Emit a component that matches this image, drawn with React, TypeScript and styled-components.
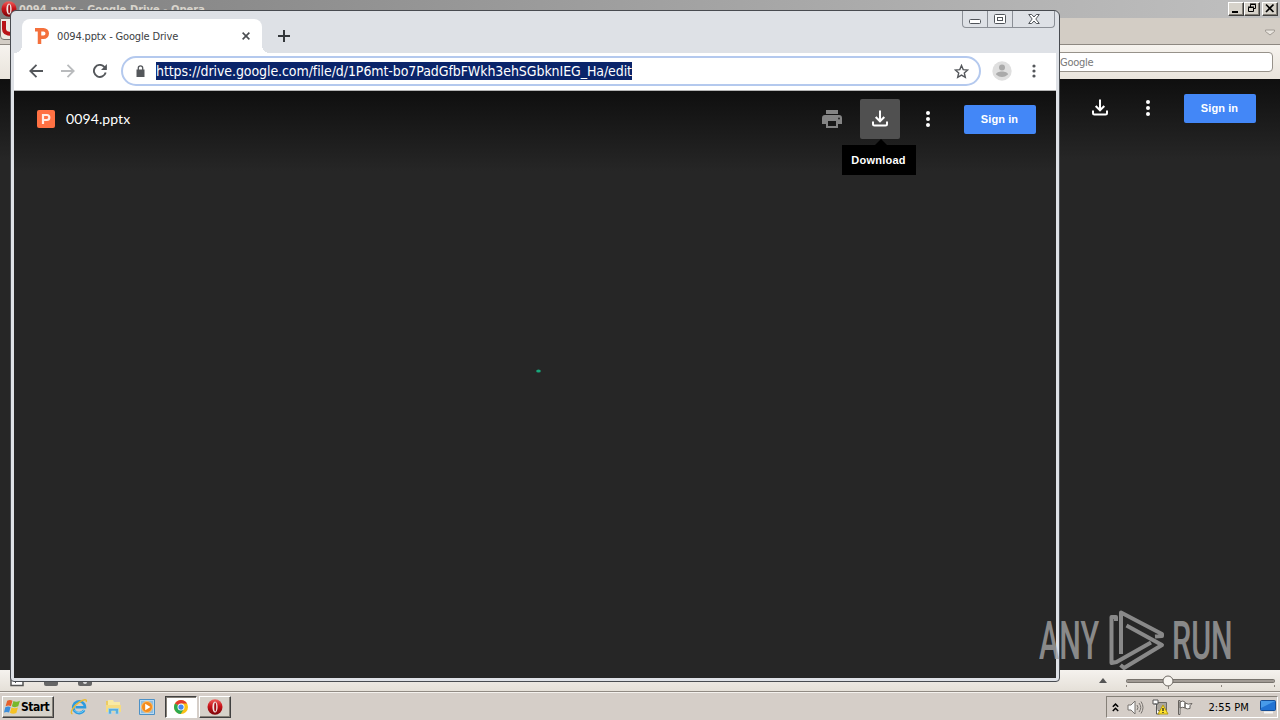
import type { ReactNode } from 'react';
import styled, { createGlobalStyle, css } from 'styled-components';

const tahoma = "'DejaVu Sans Condensed', 'DejaVu Sans', sans-serif";
const arial = "'Liberation Sans', Arial, sans-serif";

const DownloadIcon = () => (
  <svg width="18" height="18" viewBox="0 0 18 18" fill="none" stroke="#fff" strokeWidth="2">
    <path d="M9 .5v10.500M4.700 7 9 11.300 13.300 7M2 11.500V14q0 1.500 1.500 1.500h11Q16 15.500 16 14v-2.500" />
  </svg>
);

const DotsIcon = ({ color = '#fff', r = 2, gap = 6 }: { color?: string; r?: number; gap?: number }) => (
  <svg width="6" height="18" viewBox="0 0 6 18" fill={color}>
    <circle cx="3" cy={9 - gap} r={r} />
    <circle cx="3" cy="9" r={r} />
    <circle cx="3" cy={9 + gap} r={r} />
  </svg>
);

const PrintIcon = () => (
  <svg width="20" height="18" viewBox="0 0 20 18" fill="#848484">
    <path d="M4 0h12v4H4zM3 5h14a3 3 0 0 1 3 3v6h-4v4H4v-4H0V8a3 3 0 0 1 3-3z" />
    <path d="M6 11h8v5H6z" fill="#181818" />
    <circle cx="17" cy="8.5" r="1" fill="#222" />
  </svg>
);

const OperaIcon = ({ size = 16 }: { size?: number }) => (
  <svg width={size} height={size} viewBox="0 0 16 16">
    <defs>
      <linearGradient id="operaRed" x1="0" y1="0" x2="0" y2="1">
        <stop offset="0" stopColor="#f0605c" />
        <stop offset=".45" stopColor="#c8141a" />
        <stop offset="1" stopColor="#7c0408" />
      </linearGradient>
    </defs>
    <ellipse cx="8" cy="8" rx="7.5" ry="7.7" fill="url(#operaRed)" />
    <ellipse cx="8" cy="8" rx="2.6" ry="5.6" fill="#f1e8e5" />
    <ellipse cx="8.2" cy="8" rx="1" ry="4.6" fill="#a50c12" />
  </svg>
);

const ChromeIcon = () => (
  <svg width="14" height="14" viewBox="0 0 16 16">
    <circle cx="8" cy="8" r="8" fill="#fbc116" />
    <path d="M8 8 1.1 4A8 8 0 0 1 14.9 4H8z" fill="#e33b2e" />
    <path d="M1.1 4A8 8 0 0 0 7.6 16L11.5 10 8 8z" fill="#2da94f" />
    <circle cx="8" cy="8" r="4" fill="#fff" />
    <circle cx="8" cy="8" r="3" fill="#4688f1" />
  </svg>
);

const IeIcon = () => (
  <svg width="18" height="18" viewBox="0 0 18 18" fill="none">
    <path d="M14.2 12.2A5.9 5.9 0 1 1 15 9.3H5.5" stroke="#2d9be0" strokeWidth="2.6" />
    <path d="M14 11.8A5.5 5.5 0 0 1 4.5 12" stroke="#75cff5" strokeWidth="1" />
    <path d="M2.5 15.8C-.8 15.5 3.2 8 9 4.3c4.5-3 8.5-3.8 7.1-.3" stroke="#e9bb35" strokeWidth="1.4" />
  </svg>
);

const FolderIcon = () => (
  <svg width="17" height="16" viewBox="0 0 17 16">
    <path d="M1 2h5l1 2h8v9H1z" fill="#eccb62" />
    <path d="M3 1h5l1 2h6v4H3z" fill="#f8eaa4" />
    <path d="M1 6h15v7H1z" fill="#f5dc82" />
    <path d="M3.5 15V9.5h10V15h-3v-3h-4v3z" fill="#5aaddd" stroke="#a9daf2" strokeWidth=".7" />
  </svg>
);

const PlayerIcon = () => (
  <svg width="16" height="16" viewBox="0 0 16 16">
    <path d="M.5.5h15v15H.5z" fill="#b8d9f1" stroke="#4d91c6" />
    <path d="M2 2h12v12H2z" fill="#8fbde0" />
    <circle cx="8" cy="8" r="5.5" fill="#f38b1d" stroke="#ffc16d" />
    <path d="m6.2 4.7 5.3 3.3-5.3 3.3z" fill="#fff" />
  </svg>
);

const WindowsFlag = () => (
  <svg width="17" height="16" viewBox="0 0 16 15">
    <path d="M3 1.500C5 .500 6.500.700 8 1.500L6.500 6.700C5 6 3.300 6 1.500 6.800z" fill="#e6602b" />
    <path d="M8.900 1.900c1.800.900 3.900.800 6.100-.300l-1.600 5.300c-2 1-4.200 1-6-.100z" fill="#78b82d" />
    <path d="M1.200 7.700c1.900-.800 3.500-.800 5-.100L4.800 12.700C3.300 12 1.700 12 0 12.700z" fill="#3d8edb" />
    <path d="M7.100 8c1.800.900 3.900.900 6-.100l-1.500 5.200c-2 1-4.200.900-6-.100z" fill="#f6c224" />
  </svg>
);

const Toolbar = ({ children }: { children: ReactNode }) => <ViewerActions>{children}</ViewerActions>;

const OperaWindow = () => (
  <OperaFrame>
    <OperaTitle>
      <OperaIcon />
      <span>0094.pptx - Google Drive - Opera</span>
      <ClassicButtons>
        <ClassicButton>
          <svg width="14" height="11"><path d="M3 8h6v2H3z" /></svg>
        </ClassicButton>
        <ClassicButton>
          <svg width="14" height="11" fill="none" stroke="#000">
            <path d="M5.500 4V1.500h5v4H9M5 1h6M3.500 4.500h5v4h-5zM3 4h6" />
          </svg>
        </ClassicButton>
        <ClassicButton $gap>
          <svg width="14" height="11" stroke="#000" strokeWidth="1.700"><path d="m3 1.500 7.500 7.500m0-7.500L3 9" /></svg>
        </ClassicButton>
      </ClassicButtons>
    </OperaTitle>
    <OperaTabs>
      <OperaMenu>
        <svg width="12" height="16" viewBox="0 0 12 16" fill="none" stroke="#b91217" strokeWidth="4">
          <path d="M3 0v8q0 5 8 5" />
        </svg>
      </OperaMenu>
      <svg width="10" height="7" viewBox="0 0 10 7" fill="#e9e5df" stroke="#a09b94">
        <path d="M.5 1h9v1.500L5 6 .5 2.500z" />
      </svg>
    </OperaTabs>
    <OperaAddress>
      <OperaSearch>Google</OperaSearch>
    </OperaAddress>
    <OperaPage>
      <Toolbar>
        <IconSlot><DownloadIcon /></IconSlot>
        <IconSlot><DotsIcon /></IconSlot>
        <SignIn>Sign in</SignIn>
      </Toolbar>
    </OperaPage>
    <OperaStatus>
      <StatusIcons>
        <svg width="84" height="14" viewBox="0 0 84 14">
          <path d="M1 0v11.500h12V0" fill="#fff" stroke="#555" strokeWidth="1.500" />
          <path d="m3 6 3 3" stroke="#555" />
          <path d="M34 6h14v4q0 2-2 2H36q-2 0-2-2z" fill="#666" />
          <path d="M68 6h14v4q0 2-2 2H70q-2 0-2-2z" fill="#666" />
          <circle cx="75" cy="8" r="2" fill="#ddd" />
        </svg>
      </StatusIcons>
      <svg width="8" height="5" viewBox="0 0 8 5" fill="#555"><path d="m4 0 4 5H0z" /></svg>
      <svg width="150" height="18" viewBox="0 0 150 18">
        <rect x=".5" y="7.500" width="148" height="3" rx="1" fill="#a09a94" stroke="#77726c" />
        <path d="M.5 13v2M42.500 13v4M95.500 13v2M148.500 13v2" stroke="#8d8780" />
        <circle cx="42" cy="9" r="5" fill="#f8f5f0" stroke="#6e6963" />
      </svg>
    </OperaStatus>
  </OperaFrame>
);

const ChromeWindow = () => (
  <ChromeFrame>
    <TabStrip>
      <Tab>
        <svg width="14" height="16" viewBox="0 0 14 16" fill="none" stroke="#f4703c" strokeWidth="3.500">
          <path d="M0 1.750h8.500a3.250 3.250 0 0 1 0 7.500H5M4.500 1v15" />
        </svg>
        <TabTitle>0094.pptx - Google Drive</TabTitle>
        <svg width="8" height="8" viewBox="0 0 9 9" stroke="#4a4d51" strokeWidth="1.800"><path d="m.7.7 7.600 7.600m0-7.600L.7 8.300" /></svg>
      </Tab>
      <NewTab>
        <svg width="12" height="12" viewBox="0 0 12 12" stroke="#34373b" strokeWidth="2"><path d="M6 0v12M0 6h12" /></svg>
      </NewTab>
      <Caption>
        <CaptionButton $width={24}>
          <svg width="13" height="6"><rect x=".5" y=".5" width="11" height="4" rx="1" fill="#fff" stroke="#50545a" /></svg>
        </CaptionButton>
        <CaptionButton $width={25}>
          <svg width="12" height="10" fill="#fff" stroke="#50545a">
            <rect x=".5" y=".5" width="11" height="9" rx="1" />
            <rect x="3.500" y="3.500" width="5" height="3" />
          </svg>
        </CaptionButton>
        <CaptionButton $width={42}>
          <svg width="12" height="10" viewBox="0 0 12 10" fill="#fff" stroke="#50545a">
            <path d="M.7.5h3L6 3 8.300.5h3L7.800 5l3.500 4.500h-3L6 7 3.700 9.500h-3L4.200 5z" />
          </svg>
        </CaptionButton>
      </Caption>
    </TabStrip>
    <NavBar>
      <NavIcons>
        <svg width="14" height="14" viewBox="0 0 14 14" fill="none" stroke="#54575b" strokeWidth="1.800"><path d="M14 7H1.500M7.500.8 1.300 7l6.200 6.200" /></svg>
        <svg width="14" height="14" viewBox="0 0 14 14" fill="none" stroke="#b9bbbd" strokeWidth="1.800"><path d="M0 7h12.500M6.500.8 12.700 7l-6.200 6.200" /></svg>
        <svg width="14" height="14" viewBox="0 0 14 14" fill="none" stroke="#54575b" strokeWidth="1.900">
          <path d="M12.700 8.500A6 6 0 1 1 11.300 2.800L13 4.500" />
          <path d="M13.900 0v6H8z" fill="#54575b" stroke="none" />
        </svg>
      </NavIcons>
      <Omnibox>
        <svg width="9" height="12" viewBox="0 0 9 12" fill="#54575b">
          <path d="M.5 4.500h8V12h-8z" />
          <path d="M2.300 5V3a2.200 2.200 0 0 1 4.400 0v2" fill="none" stroke="#54575b" strokeWidth="1.300" />
        </svg>
        <Url>https://drive.google.com/file/d/1P6mt-bo7PadGfbFWkh3ehSGbknIEG_Ha/edit</Url>
        <svg width="15" height="15" viewBox="0 0 15 15" fill="none" stroke="#54575b" strokeWidth="1.400">
          <path d="m7.500 1.500 1.700 4.100 4.500.4-3.400 3 1 4.400-3.800-2.300-3.800 2.300 1-4.400L1.300 6l4.500-.4z" />
        </svg>
      </Omnibox>
      <svg width="20" height="20" viewBox="0 0 20 20">
        <circle cx="10" cy="10" r="9.700" fill="#dfdfdf" />
        <circle cx="10" cy="6.500" r="3" fill="#aaa" />
        <path d="M4 13.500c0-4 12-4 12 0q-6 5-12 0z" fill="#aaa" />
      </svg>
      <DotsIcon color="#54575b" r={1.6} gap={5} />
    </NavBar>
    <DrivePage>
      <DriveHeader>
        <svg width="18" height="18" viewBox="0 0 18 18">
          <rect width="18" height="18" rx="2" fill="#ff7143" />
          <path d="M6 14V5h3.800a2.500 2.500 0 0 1 0 5H6" fill="none" stroke="#ffece5" strokeWidth="2.200" />
        </svg>
        <FileName>0094.pptx</FileName>
        <Toolbar>
          <IconSlot><PrintIcon /></IconSlot>
          <IconSlot $active>
            <DownloadIcon />
            <Tooltip>Download</Tooltip>
          </IconSlot>
          <IconSlot><DotsIcon /></IconSlot>
          <SignIn>Sign in</SignIn>
        </Toolbar>
      </DriveHeader>
      <Loader>
        <svg width="5" height="4"><ellipse cx="2.500" cy="2" rx="2.300" ry="1.600" fill="#18a77b" /></svg>
      </Loader>
    </DrivePage>
  </ChromeFrame>
);

const Taskbar = () => (
  <TaskbarFrame>
    <StartButton>
      <WindowsFlag />
      <span>Start</span>
    </StartButton>
    <QuickLaunch>
      <IeIcon />
      <FolderIcon />
      <PlayerIcon />
    </QuickLaunch>
    <TaskButton $pressed><ChromeIcon /></TaskButton>
    <TaskButton><OperaIcon /></TaskButton>
    <Tray>
      <svg width="7" height="9" viewBox="0 0 7 9" fill="none" stroke="#000" strokeWidth="1.500"><path d="m.8 3.800 2.700-2.700 2.700 2.700M.8 8l2.700-2.700L6.200 8" /></svg>
      <svg width="17" height="15" viewBox="0 0 17 15" fill="none" stroke="#77736f">
        <path d="M1 5h3l4-4v13l-4-4H1z" fill="#fafafa" />
        <path d="M10 5q2 2.500 0 5M12 3q3.500 4.500 0 9M14 1.500q4 6 0 12" />
      </svg>
      <svg width="17" height="16" viewBox="0 0 17 16">
        <path d="M4.500 3.500h10v8h-10z" fill="#aaa69e" stroke="#6b6965" />
        <path d="M1 1h5v4H1zM2.500 5h2v10h3" fill="#fff" stroke="#555" />
        <path d="m11 6 5 9H6z" fill="#ffe32c" stroke="#b69a12" />
        <path d="M11 9v3M11 13v1" stroke="#222" strokeWidth="1.300" />
      </svg>
      <svg width="16" height="15" viewBox="0 0 16 15" fill="#fff" stroke="#66625e">
        <path d="M1.500.5v14h1.500V.5zM3 2q3-2 5 0v6q-2-1.500-5 0zM8 3q3 2 7 .5-3 2-2 5Q10 9.500 8 8z" />
      </svg>
      <Clock>2:55 PM</Clock>
      <svg width="16" height="14" viewBox="0 0 16 14">
        <rect x=".5" y=".5" width="15" height="10" rx="1" fill="#2273d3" stroke="#164e96" />
        <path d="M1 1h14L1 8z" fill="#5eb1f5" opacity=".65" />
        <path d="M4 12.500h9" stroke="#f5f5f5" strokeWidth="2" />
      </svg>
    </Tray>
  </TaskbarFrame>
);

const App = () => (
  <Desktop>
    <GlobalStyle />
    <OperaWindow />
    <ChromeWindow />
    <Taskbar />
    <Watermark>
      <Wordmark>ANY</Wordmark>
      <svg width="57" height="64" viewBox="0 0 57 64" fill="none" stroke="#a2a2a2" strokeWidth="4" strokeLinejoin="round">
        <path d="M8 12V8H3.500V54l5-1L43 33.500" />
        <path d="M13 45V3.500L54 25v2l-7 .5" />
        <path d="M18.500 16.500 54 36 16 59l-3.500-3" />
      </svg>
      <Wordmark>RUN</Wordmark>
    </Watermark>
  </Desktop>
);

export default App;

const GlobalStyle = createGlobalStyle`
  * {
    box-sizing: border-box;
  }

  body {
    margin: 0;
    font-family: ${tahoma};
    font-size: 11px;
    color: #000;
  }

  svg {
    display: block;
    flex: none;
  }
`;

const raised = css`
  background: #d6d2ca;
  border: 1px solid;
  border-color: #fff #404040 #404040 #fff;
  box-shadow: inset -1px -1px #858078;
`;

const Desktop = styled.div`
  position: relative;
  display: flex;
  flex-direction: column;
  width: 1280px;
  height: 720px;
  overflow: hidden;
  background: #d4d0c8;
`;

const OperaFrame = styled.div`
  flex: 1;
  display: flex;
  flex-direction: column;
`;

const OperaTitle = styled.div`
  display: flex;
  align-items: center;
  gap: 2px;
  height: 18px;
  padding: 0 2px 0 1px;
  background: linear-gradient(90deg, #808080, #c0c0c0);
  color: #d8d4cc;
  font-weight: bold;
  font-size: 11px;
  letter-spacing: 0.05px;
`;

const ClassicButtons = styled.div`
  display: flex;
  margin-left: auto;
`;

const ClassicButton = styled.div<{ $gap?: boolean }>`
  ${raised}
  width: 16px;
  height: 14px;
  margin-left: ${({ $gap }) => ($gap ? '2px' : 0)};
  overflow: hidden;
`;

const OperaTabs = styled.div`
  display: flex;
  justify-content: space-between;
  align-items: center;
  height: 27px;
  padding-right: 5px;
  background: #d3cdc5;
  border-bottom: 1px solid #8d8881;

  > svg {
    margin-top: 2px;
  }
`;

const OperaMenu = styled.div`
  align-self: flex-start;
  width: 40px;
  height: 22px;
  padding: 2px 0 0;
  border: 1px solid #77736e;
  border-radius: 0 0 4px 4px;
  background: #ece8e3;
`;

const OperaAddress = styled.div`
  display: flex;
  align-items: center;
  justify-content: flex-end;
  height: 34px;
  padding: 0 7px 0 0;
  background: linear-gradient(#f6f3ee, #e9e4dc);
`;

const OperaSearch = styled.div`
  width: 233px;
  height: 20px;
  padding-left: 19px;
  line-height: 19px;
  border: 1px solid #97928a;
  border-radius: 4px;
  background: #fff;
  color: #777;
  letter-spacing: -0.25px;
`;

const pageShade = css`
  background: linear-gradient(#0f0f0f, #262626 80px);
`;

const OperaPage = styled.div`
  flex: 1;
  display: flex;
  align-items: flex-start;
  padding: 9px 24px 0 0;
  ${pageShade}
`;

const ViewerActions = styled.div`
  display: flex;
  align-items: center;
  gap: 8px;
  margin-left: auto;
`;

const IconSlot = styled.div<{ $active?: boolean }>`
  position: relative;
  display: flex;
  align-items: center;
  justify-content: center;
  width: 40px;
  height: 40px;
  border-radius: 2px;
  background: ${({ $active }) => ($active ? '#505050' : 'transparent')};
`;

const SignIn = styled.div`
  width: 72px;
  height: 29px;
  margin-left: 8px;
  padding-right: 1px;
  border-radius: 2px;
  background: #4387f7;
  color: #fff;
  font: bold 11px/28px ${arial};
  letter-spacing: 0.1px;
  text-align: center;
`;

const Tooltip = styled.div`
  position: absolute;
  top: 46px;
  left: -18px;
  width: 74px;
  height: 30px;
  padding-right: 1px;
  background: #000;
  color: #fff;
  font: bold 11px/30px ${arial};
  letter-spacing: 0.25px;
  text-align: center;

  &::before {
    content: '';
    position: absolute;
    left: 33px;
    top: -6px;
    border: 6px solid transparent;
    border-top: 0;
    border-bottom-color: #000;
  }
`;

const OperaStatus = styled.div`
  display: flex;
  align-items: center;
  height: 22px;
  padding-right: 4px;
  border-bottom: 1px solid #918b84;
  background: linear-gradient(#f5f2ee, #e5e0d8);
  gap: 19px;
`;

const StatusIcons = styled.div`
  flex: 1;
  padding-left: 10px;
`;

const ChromeFrame = styled.div`
  position: absolute;
  left: 10px;
  top: 10px;
  display: flex;
  flex-direction: column;
  width: 1050px;
  height: 672px;
  padding: 0 3px 3px;
  border: 1px solid #484b50;
  border-radius: 6px 6px 4px 4px;
  background: #dee1e6;
`;

const TabStrip = styled.div`
  display: flex;
  height: 42px;
  padding: 0 1px 0 8px;
`;

const Tab = styled.div`
  position: relative;
  display: flex;
  align-items: center;
  width: 240px;
  height: 34px;
  margin-top: 8px;
  padding: 0 12px 0 13px;
  border-radius: 8px 8px 0 0;
  background: #fff;

  &::before,
  &::after {
    content: '';
    position: absolute;
    bottom: 0;
    width: 8px;
    height: 8px;
  }

  &::before {
    left: -8px;
    background: radial-gradient(circle at 0 0, transparent 8px, #fff 8px);
  }

  &::after {
    right: -8px;
    background: radial-gradient(circle at 100% 0, transparent 8px, #fff 8px);
  }
`;

const TabTitle = styled.span`
  flex: 1;
  margin-left: 8px;
  color: #3c4043;
  letter-spacing: -0.16px;
  white-space: nowrap;
`;

const NewTab = styled.div`
  padding: 19px 0 0 16px;
`;

const Caption = styled.div`
  display: flex;
  height: 17px;
  margin-left: auto;
  border: solid #8b8f96;
  border-width: 0 1px 1px;
  border-radius: 0 0 4px 4px;
`;

const CaptionButton = styled.div<{ $width: number }>`
  display: flex;
  align-items: center;
  justify-content: center;
  width: ${({ $width }) => $width}px;

  & + & {
    border-left: 1px solid #8b8f96;
  }

  &:first-child svg {
    margin-top: 6px;
  }
`;

const NavBar = styled.div`
  display: flex;
  align-items: center;
  height: 38px;
  padding: 0 19px 1px 15px;
  border-bottom: 1px solid #b4b4b4;
  background: #fff;

  > svg:last-child {
    margin-left: auto;
  }
`;

const NavIcons = styled.div`
  display: flex;
  gap: 18px;
`;

const Omnibox = styled.div`
  display: flex;
  align-items: center;
  width: 860px;
  height: 30px;
  margin: 0 11px 0 14px;
  padding: 0 10px 0 13px;
  border: 2px solid #b4c9ee;
  border-radius: 15px;

  > svg:last-child {
    margin-left: auto;
  }
`;

const Url = styled.span`
  height: 18px;
  margin-left: 11px;
  background: #0a246a;
  color: #fff;
  font-size: 14px;
  line-height: 18px;
  letter-spacing: -0.08px;
  white-space: nowrap;
`;

const DrivePage = styled.div`
  flex: 1;
  ${pageShade}
`;

const DriveHeader = styled.div`
  display: flex;
  align-items: center;
  height: 56px;
  padding: 0 20px 0 23px;
`;

const FileName = styled.span`
  margin-left: 11px;
  padding-bottom: 2px;
  color: #fff;
  font: 14px Lato, sans-serif;
  letter-spacing: 0.1px;
`;

const Loader = styled.div`
  display: flex;
  justify-content: center;
  padding: 222px 0 0 7px;
`;

const TaskbarFrame = styled.div`
  display: flex;
  align-items: center;
  height: 28px;
  padding: 1px 2px 0;
  border-top: 1px solid #f5f2ee;
  background: #d5cec8;
`;

const StartButton = styled.div`
  ${raised}
  display: flex;
  align-items: center;
  width: 52px;
  height: 22px;
  padding-left: 1px;
  font-weight: bold;
  font-size: 12px;
  letter-spacing: -0.5px;
`;

const QuickLaunch = styled.div`
  display: flex;
  align-items: center;
  gap: 17px;
  margin: 0 10px 0 16px;
`;

const TaskButton = styled.div<{ $pressed?: boolean }>`
  ${raised}
  display: flex;
  align-items: center;
  justify-content: center;
  width: 32px;
  height: 22px;
  margin-right: 2px;
  ${({ $pressed }) =>
    $pressed &&
    css`
      background: #fff;
      border-color: #404040 #fff #fff #404040;
      box-shadow: inset 1px 1px #858078;
    `}
`;

const Tray = styled.div`
  display: flex;
  align-items: center;
  width: 172px;
  height: 22px;
  margin-left: auto;
  padding: 0 1px 0 5px;
  border: 1px solid;
  border-color: #858078 #fff #fff #858078;
  gap: 8px;
`;

const Clock = styled.span`
  margin: 0 3px 0 auto;
  letter-spacing: 0.1px;
  white-space: nowrap;
`;

const Watermark = styled.div`
  position: absolute;
  left: 1039px;
  top: 609px;
  display: flex;
  align-items: center;
  gap: 7px;
  opacity: 0.8;
`;

const Wordmark = styled.div`
  width: 62px;
  color: #a2a2a2;
  font: 500 53px/64px Roboto, sans-serif;
  transform: scaleX(0.575);
  transform-origin: 0 50%;
`;
